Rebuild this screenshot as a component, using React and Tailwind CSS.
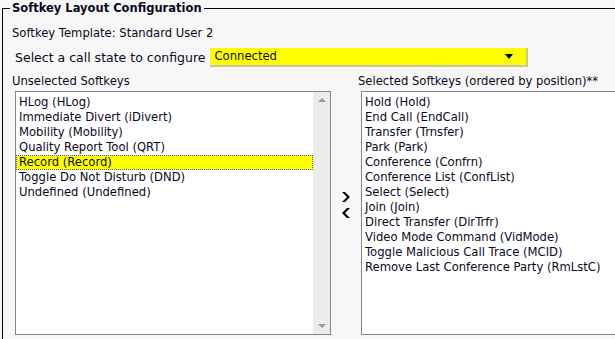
import React from 'react';

const unselected = [
  'HLog (HLog)',
  'Immediate Divert (iDivert)',
  'Mobility (Mobility)',
  'Quality Report Tool (QRT)',
  'Record (Record)',
  'Toggle Do Not Disturb (DND)',
  'Undefined (Undefined)',
];

const selected = [
  'Hold (Hold)',
  'End Call (EndCall)',
  'Transfer (Trnsfer)',
  'Park (Park)',
  'Conference (Confrn)',
  'Conference List (ConfList)',
  'Select (Select)',
  'Join (Join)',
  'Direct Transfer (DirTrfr)',
  'Video Mode Command (VidMode)',
  'Toggle Malicious Call Trace (MCID)',
  'Remove Last Conference Party (RmLstC)',
];

const Chevron = ({ dir }) => (
  <svg width="10" height="12" viewBox="0 0 10 12" className="block">
    {dir === 'right' ? (
      <path d="M1 1 H4 L9 6 L4 11 H1 L6 6 Z" fill="#000" />
    ) : (
      <path d="M9 1 H6 L1 6 L6 11 H9 L4 6 Z" fill="#000" />
    )}
  </svg>
);

const App = () => {
  const hl = 'Record (Record)';
  return (
    <div className="w-[615px] h-[339px] overflow-hidden bg-[#f7f7f7] text-[11.6px] text-[#0a0a1e] font-['DejaVu_Sans',sans-serif] leading-[15px]">
      <fieldset className="ml-[2px] w-[700px] border border-black pl-[9px] pb-[4px]">
        <legend className="-ml-[2px] px-[2px] text-[11.5px] font-bold leading-[17px]">Softkey Layout Configuration</legend>

        <div className="mt-[9px]">Softkey Template: Standard User 2</div>

        <div className="flex items-center mt-[7px] ml-[3px]">
          <span className="text-[12.5px]">Select a call state to configure</span>
          <div className="ml-[4px] w-[318px] h-[19px] bg-[#ffff00] border-r-2 border-b-2 border-[#c8c8a0] flex items-center pl-[5px] pr-[13px]">
            <span className="flex-1">Connected</span>
            <svg width="8" height="5" viewBox="0 0 8 5"><path d="M0 0 H8 L4 5 Z" fill="#000" /></svg>
          </div>
        </div>

        <div className="flex mt-[7px]">
          <div>
            <div>Unselected Softkeys</div>
            <div className="ml-[3px] mt-[2px] w-[316px] h-[244px] bg-white border border-[#7f878f] flex">
              <div className="flex-1 pt-[3px]">
                {unselected.map((s) => (
                  <div
                    key={s}
                    className={s === hl ? 'pl-[3px] bg-[#ffff00] outline outline-1 outline-dotted outline-[#3a6ab0] -outline-offset-1' : 'pl-[3px]'}
                  >
                    {s}
                  </div>
                ))}
              </div>
              <div className="w-[17px] bg-[#ececec] flex flex-col justify-between items-center py-[6px]">
                <svg width="8" height="4" viewBox="0 0 8 4"><path d="M0 4 H8 L4 0 Z" fill="#9a9a9a" /></svg>
                <svg width="8" height="4" viewBox="0 0 8 4"><path d="M0 0 H8 L4 4 Z" fill="#9a9a9a" /></svg>
              </div>
            </div>
          </div>

          <div className="w-[27px] flex flex-col items-center justify-center gap-[4px] pl-[2px]">
            <Chevron dir="right" />
            <Chevron dir="left" />
          </div>

          <div>
            <div>Selected Softkeys (ordered by position)**</div>
            <div className="ml-[3px] mt-[2px] w-[300px] h-[244px] bg-white border border-[#7f878f] pt-[3px]">
              {selected.map((s) => (
                <div key={s} className="pl-[3px]">{s}</div>
              ))}
            </div>
          </div>
        </div>
      </fieldset>
    </div>
  );
};

export default App;
